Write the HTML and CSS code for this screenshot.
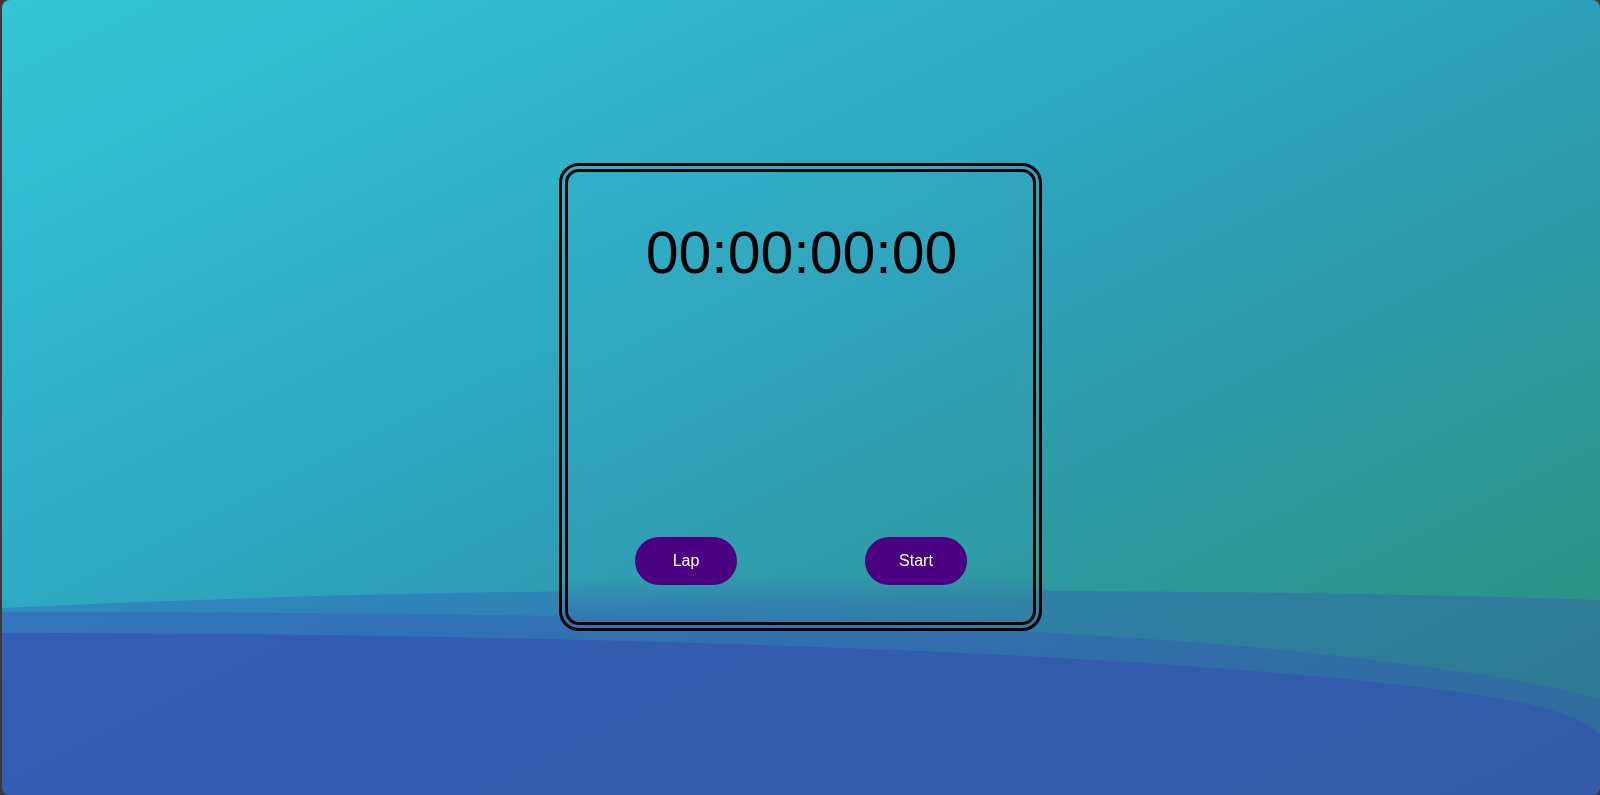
FILE: index.html
```html
<!DOCTYPE html>
<html lang="en">
<head>
<meta charset="utf-8">
<title>Stopwatch</title>
<link rel="stylesheet" href="styles.css">
</head>
<body>
<div class="frame">
  <div class="app">
    <svg class="waves" viewBox="0 0 1598 795" preserveAspectRatio="none" aria-hidden="true">
      <path class="wave-a" d="M0,608 C250,596 500,590 800,590 C1100,590 1400,593 1598,600 L1598,795 L0,795 Z"/>
      <path class="wave-b" d="M0,612 C600,612 1000,622 1300,652 C1450,668 1550,684 1598,700 L1598,795 L0,795 Z"/>
      <path class="wave-c" d="M0,633 C500,633 1000,648 1300,675 C1480,692 1570,705 1598,735 L1598,795 L0,795 Z"/>
    </svg>
    <main class="stage">
      <section class="watch">
        <div class="time">00:00:00:00</div>
        <div class="controls">
          <button class="btn" type="button">Lap</button>
          <button class="btn" type="button">Start</button>
        </div>
      </section>
    </main>
  </div>
</div>
</body>
</html>
```
FILE: styles.css
```css
* { box-sizing: border-box; }
html, body {
  margin: 0;
  padding: 0;
  width: 1600px;
  height: 795px;
  overflow: hidden;
  font-family: "Liberation Sans", Arial, sans-serif;
}
.frame {
  width: 1600px;
  height: 795px;
  background: #3a3a3a;
  display: flex;
}
.app {
  position: relative;
  margin-left: 2px;
  flex: 1;
  height: 795px;
  border-radius: 8px;
  overflow: hidden;
  background: linear-gradient(to bottom right, #34c6d5 0%, #2fb0c8 30%, #2e9fb9 50%, #2c958f 80%, #2a8e7a 100%);
}
.waves {
  position: absolute;
  left: 0;
  top: 0;
  width: 100%;
  height: 100%;
}
.wave-a { fill: rgba(52, 82, 182, 0.36); }
.wave-b { fill: rgba(52, 82, 182, 0.36); }
.wave-c { fill: rgba(52, 82, 175, 0.66); }
.stage {
  position: relative;
  display: flex;
  justify-content: center;
  padding-top: 163px;
  padding-right: 1px;
}
.watch {
  width: 483px;
  height: 468px;
  border: 9px double #000;
  border-radius: 20px;
  backdrop-filter: blur(10px);
  background: rgba(255, 255, 255, 0.01);
  display: flex;
  flex-direction: column;
  justify-content: space-between;
  align-items: stretch;
  padding: 48px 0 37px;
}
.time {
  text-align: center;
  font-size: 59px;
  line-height: 66px;
  color: #000;
  padding-left: 2px;
}
.controls {
  display: flex;
  justify-content: space-between;
  padding: 0 66px 0 67px;
}
.btn {
  width: 102px;
  height: 48px;
  border: none;
  border-radius: 24px;
  background: #4b0082;
  color: #fff;
  font-family: "Liberation Sans", Arial, sans-serif;
  font-size: 16px;
  cursor: pointer;
}
```
